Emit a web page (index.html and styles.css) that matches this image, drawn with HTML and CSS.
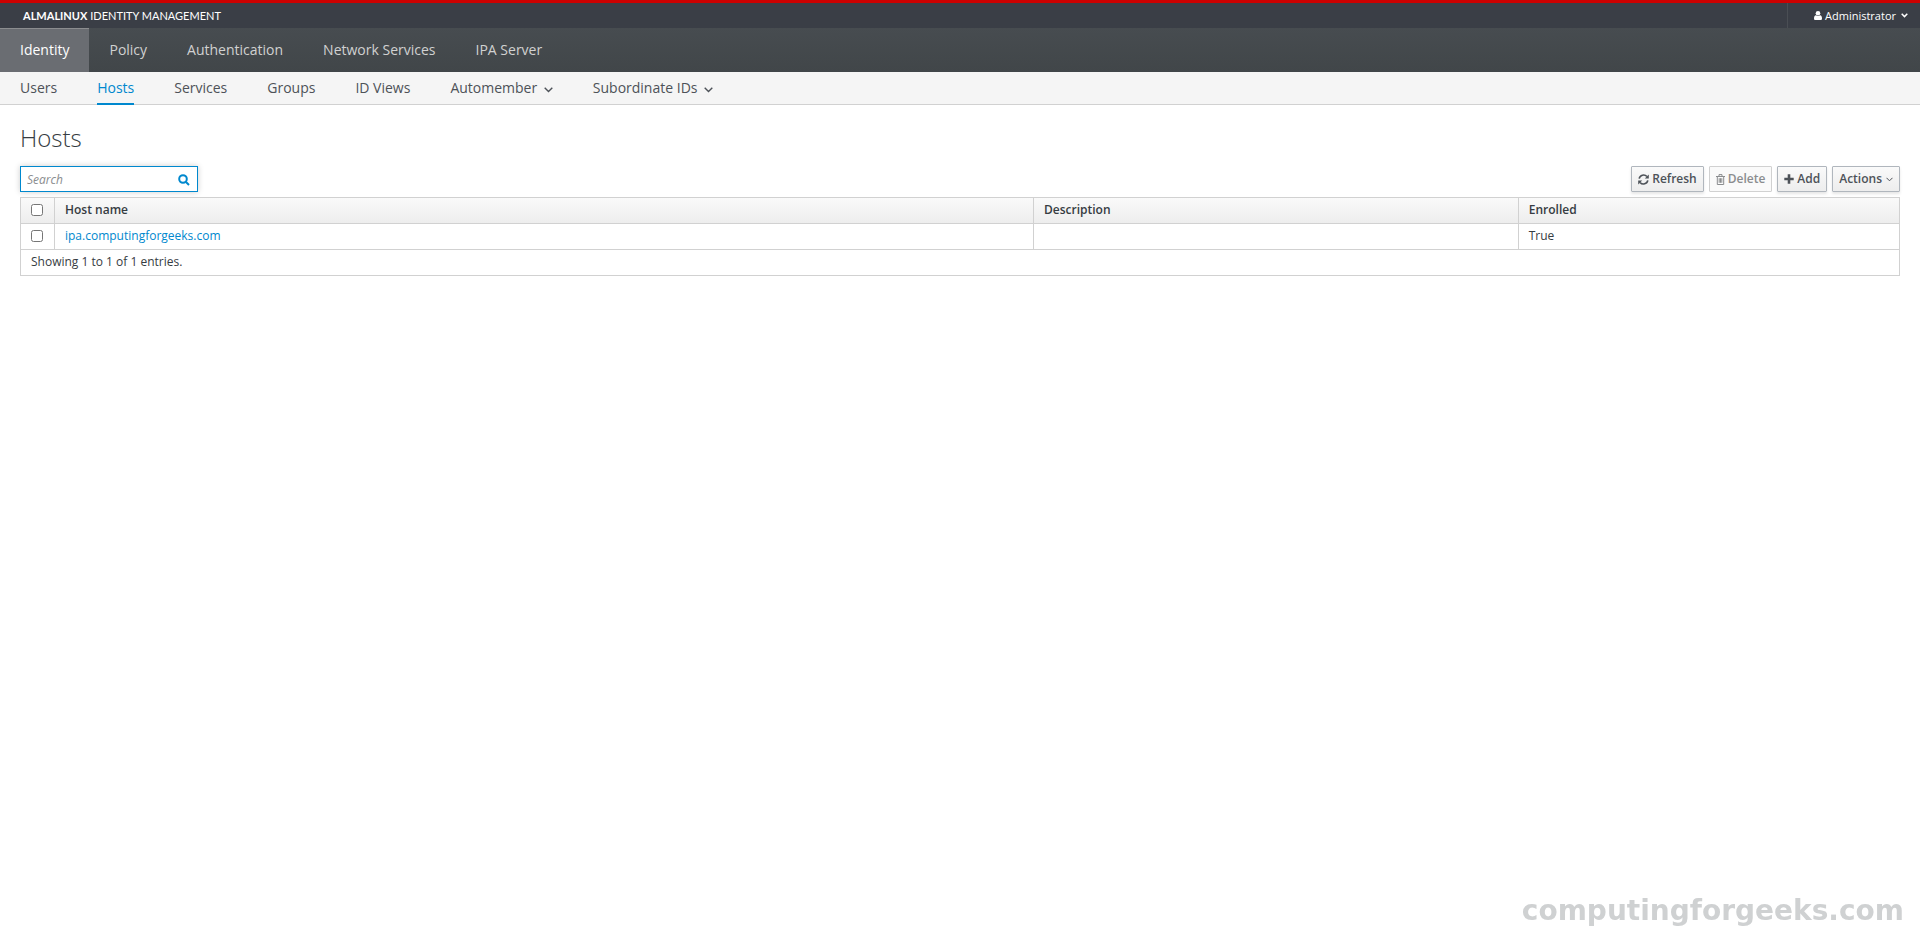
FILE: index.html
```html
<!DOCTYPE html>
<html lang="en">
<head>
  <meta charset="UTF-8">
  <meta name="viewport" content="width=device-width, initial-scale=1.0">
  <title>Identity Management</title>
  <link rel="stylesheet" href="styles.css">
</head>
<body>
  <header class="navbar">
    <div class="navbar-header">
      <a class="brand" href="#"><b>ALMALINUX</b> IDENTITY MANAGEMENT</a>
      <button class="user-menu" type="button">
        <svg class="icon-user" viewBox="0 0 8 9"><circle cx="4" cy="2.3" r="2.3"/><path d="M2 4.2C.6 4.2 0 5.5 0 7.4 0 8.4.6 9 1.500 9h5C7.400 9 8 8.400 8 7.400 8 5.500 7.400 4.200 6 4.200 5 5.300 3 5.300 2 4.200z"/></svg>
        Administrator
        <svg class="icon-caret" viewBox="0 0 7 5"><path d="M.7.8l2.800 2.800L6.300.8"/></svg>
      </button>
    </div>
    <nav class="nav-primary">
      <a class="active" href="#">Identity</a>
      <a href="#">Policy</a>
      <a href="#">Authentication</a>
      <a href="#">Network Services</a>
      <a href="#">IPA Server</a>
    </nav>
    <nav class="nav-secondary">
      <a href="#">Users</a>
      <a class="active" href="#">Hosts</a>
      <a href="#">Services</a>
      <a href="#">Groups</a>
      <a href="#">ID Views</a>
      <a href="#">Automember <svg class="chevron" viewBox="0 0 9 6"><path d="M.7.8l3.800 3.800L8.300.8"/></svg></a>
      <a href="#">Subordinate IDs <svg class="chevron" viewBox="0 0 9 6"><path d="M.7.8l3.800 3.800L8.300.8"/></svg></a>
    </nav>
  </header>

  <main class="content">
    <h1>Hosts</h1>
    <div class="controls">
      <form class="search">
        <input type="text" placeholder="Search" aria-label="Search">
        <button type="button" aria-label="Find">
          <svg viewBox="0 0 12 12"><circle cx="5" cy="5" r="3.800"/><path d="M8 8l3 3"/></svg>
        </button>
      </form>
      <div class="buttons">
        <button class="btn" type="button">
          <svg class="icon-refresh" viewBox="0 0 11 11"><path class="line" d="M1.200 4.600A4.400 4.400 0 0 1 8.900 2.600M9.800 6.400A4.400 4.400 0 0 1 2.100 8.400"/><path d="M10.800.4v4H6.800zM.2 10.600v-4h4z"/></svg>
          Refresh
        </button>
        <button class="btn" type="button" disabled>
          <svg class="icon-trash" viewBox="0 0 9 11"><path class="thin" d="M0 2.500h9M3 2.300V.600h3v1.700M1.300 2.500v8h6.400v-8M3.200 4.200v4.600M4.500 4.200v4.600M5.800 4.200v4.600"/></svg>
          Delete
        </button>
        <button class="btn" type="button">
          <svg class="icon-plus" viewBox="0 0 10 10"><path d="M3.700.3h2.600v3.400h3.400v2.600H6.300v3.400H3.700V6.300H.3V3.700h3.400z"/></svg>
          Add
        </button>
        <button class="btn btn-menu" type="button">
          Actions
          <svg class="icon-angle" viewBox="0 0 7 5"><path class="thin" d="M.5.8l3 3 3-3"/></svg>
        </button>
      </div>
    </div>

    <table class="hosts">
      <thead>
        <tr>
          <th class="col-check"><input type="checkbox" aria-label="Select all"></th>
          <th class="col-name">Host name</th>
          <th class="col-desc">Description</th>
          <th class="col-enrolled">Enrolled</th>
        </tr>
      </thead>
      <tbody>
        <tr>
          <td class="col-check"><input type="checkbox" aria-label="ipa.computingforgeeks.com"></td>
          <td><a href="#">ipa.computingforgeeks.com</a></td>
          <td></td>
          <td>True</td>
        </tr>
      </tbody>
      <tfoot>
        <tr>
          <td colspan="4">Showing 1 to 1 of 1 entries.</td>
        </tr>
      </tfoot>
    </table>
  </main>

  <div class="watermark">computingforgeeks.com</div>
</body>
</html>
```
FILE: styles.css
```css
* {
  box-sizing: border-box;
}
body {
  margin: 0;
  background: #fff;
  color: #363c42;
  font-family: "Open Sans", sans-serif;
  font-size: 12px;
  line-height: 20px;
}
a {
  color: #0088ce;
  text-decoration: none;
}
button,
input {
  font: inherit;
}

/* top bar */
.navbar {
  border-top: 3px solid #c00;
}
.navbar-header {
  display: flex;
  justify-content: space-between;
  height: 25px;
  padding-left: 23px;
  background: #3a3e46;
}
.brand {
  color: #fff;
  font-family: Lato, sans-serif;
  font-size: 11px;
  line-height: 25px;
}
.user-menu {
  display: flex;
  align-items: center;
  gap: 3px;
  padding: 0 12px 0 26px;
  border: 0;
  border-left: 1px solid #4a4e54;
  background: none;
  color: #fff;
  font-size: 11px;
}
.icon-user {
  width: 8px;
  height: 9px;
  fill: #fff;
}
.icon-caret {
  width: 7px;
  height: 5px;
  margin-left: 2px;
  fill: none;
  stroke: #fff;
  stroke-width: 1.5;
}
.chevron {
  width: 9px;
  height: 6px;
  margin-left: 3px;
  fill: none;
  stroke: currentColor;
  stroke-width: 1.4;
}

/* menus */
.nav-primary {
  display: flex;
  height: 44px;
  background: linear-gradient(#474c50, #414649);
}
.nav-primary a {
  padding: 0 20px;
  color: #d1d1d1;
  font-size: 14px;
  line-height: 44px;
}
.nav-primary .active {
  border-top: 1px solid #8b8d8f;
  background: #6a6d72;
  color: #fff;
  line-height: 42px;
}
.nav-secondary {
  display: flex;
  gap: 40px;
  height: 33px;
  padding: 0 20px;
  border-bottom: 1px solid #d1d1d1;
  background: #f5f5f5;
}
.nav-secondary a {
  height: 33px;
  color: #4d5258;
  font-size: 14px;
  line-height: 32px;
}
.nav-secondary .active {
  border-bottom: 2px solid #0088ce;
  color: #0088ce;
}

/* host list */
.content {
  padding: 19px 20px 0;
}
h1 {
  margin: 0 0 15px;
  font-size: 24px;
  font-weight: 300;
  line-height: 27px;
}
.controls {
  display: flex;
  justify-content: space-between;
  margin-bottom: 5px;
}
.search {
  display: flex;
  width: 178px;
  height: 26px;
  border: 1px solid #0088ce;
  box-shadow: 0 0 6px rgba(0, 0, 0, 0.2);
}
.search input {
  flex: 1;
  min-width: 0;
  padding: 1px 6px 0;
  border: 0;
  outline: none;
  background: #fff;
}
.search input::placeholder {
  color: #8b8d8f;
  font-style: italic;
}
.search button {
  display: flex;
  align-items: center;
  padding: 2px 7px 0;
  border: 0;
  background: #fff;
}
.search svg {
  width: 12px;
  height: 12px;
  fill: none;
  stroke: #0088ce;
  stroke-width: 2;
}
.buttons {
  display: flex;
  gap: 5px;
}
.btn {
  display: flex;
  align-items: center;
  gap: 3px;
  height: 26px;
  padding: 0 6px;
  border: 1px solid #b0b6bd;
  border-radius: 1px;
  background: linear-gradient(#fafafa, #ededed);
  box-shadow: 0 2px 3px rgba(3, 3, 3, 0.1);
  color: #4d5258;
  font-weight: 600;
}
.btn-menu {
  gap: 4px;
}
.btn:disabled {
  border-color: #d1d1d1;
  background: #fafafa;
  box-shadow: none;
  color: #8b8d8f;
}
.btn svg {
  fill: currentColor;
}
.btn .line,
.btn .thin {
  fill: none;
  stroke: currentColor;
  stroke-width: 1.6;
}
.btn .thin {
  stroke-width: 1;
}
.icon-refresh {
  width: 11px;
  height: 11px;
}
.icon-trash {
  width: 9px;
  height: 11px;
}
.icon-plus {
  width: 10px;
  height: 10px;
}
.icon-angle {
  width: 7px;
  height: 5px;
}

.hosts {
  width: 100%;
  border: 1px solid #d1d1d1;
  border-collapse: collapse;
  table-layout: fixed;
}
.hosts th,
.hosts td {
  height: 26px;
  padding: 2px 10px 3px;
  border: 1px solid #d1d1d1;
  text-align: left;
}
.hosts th {
  font-weight: 600;
}
.hosts thead {
  background: linear-gradient(#fafafa, #ededed);
}
.hosts .col-check {
  width: 34px;
}
.col-name {
  width: 52.1%;
}
.col-desc {
  width: 25.8%;
}
.hosts input {
  display: block;
  width: 12px;
  height: 12px;
  margin: 0;
}

.watermark {
  position: fixed;
  right: 16px;
  bottom: 12px;
  color: #cfd1d2;
  font: bold 28px/36px "DejaVu Sans", sans-serif;
}
```
